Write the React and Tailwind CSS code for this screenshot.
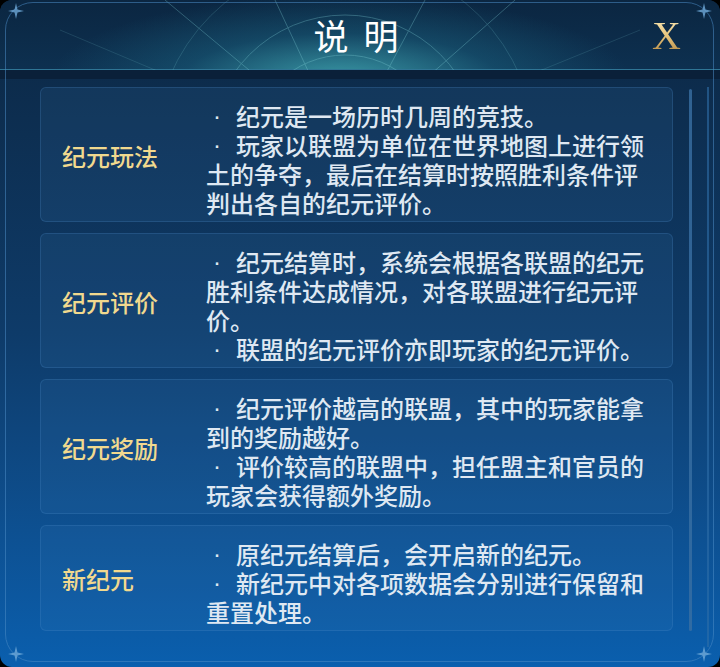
import React from "react";

const sections = [
  {
    title: "纪元玩法",
    lines: [
      [true, "纪元是一场历时几周的竞技。"],
      [true, "玩家以联盟为单位在世界地图上进行领"],
      [false, "土的争夺，最后在结算时按照胜利条件评"],
      [false, "判出各自的纪元评价。"],
    ],
  },
  {
    title: "纪元评价",
    lines: [
      [true, "纪元结算时，系统会根据各联盟的纪元"],
      [false, "胜利条件达成情况，对各联盟进行纪元评"],
      [false, "价。"],
      [true, "联盟的纪元评价亦即玩家的纪元评价。"],
    ],
  },
  {
    title: "纪元奖励",
    lines: [
      [true, "纪元评价越高的联盟，其中的玩家能拿"],
      [false, "到的奖励越好。"],
      [true, "评价较高的联盟中，担任盟主和官员的"],
      [false, "玩家会获得额外奖励。"],
    ],
  },
  {
    title: "新纪元",
    lines: [
      [true, "原纪元结算后，会开启新的纪元。"],
      [true, "新纪元中对各项数据会分别进行保留和"],
      [false, "重置处理。"],
    ],
  },
];

const FONT = { fontFamily: '"Noto Sans CJK SC", "Noto Sans", sans-serif' };

function HeaderArcs() {
  return (
    <svg
      className="absolute inset-0 pointer-events-none"
      width="720"
      height="70"
      viewBox="0 0 720 70"
    >
      <g fill="none" stroke="#86d6dc" strokeWidth="1" opacity="0.3">
        <circle cx="345" cy="150" r="95" />
        <circle cx="345" cy="150" r="135" />
        <circle cx="345" cy="150" r="190" opacity="0.6" />
        <line x1="345" y1="150" x2="165" y2="0" />
        <line x1="345" y1="150" x2="515" y2="0" />
        <line x1="345" y1="150" x2="275" y2="0" />
        <line x1="345" y1="150" x2="425" y2="0" />
        <line x1="345" y1="150" x2="60" y2="30" opacity="0.5" />
        <line x1="345" y1="150" x2="640" y2="30" opacity="0.5" />
      </g>
    </svg>
  );
}

function CornerStar({ className }) {
  return (
    <svg className={className} width="16" height="16" viewBox="0 0 16 16">
      <path
        d="M8 0 L9.5 6.5 L16 8 L9.5 9.5 L8 16 L6.5 9.5 L0 8 L6.5 6.5 Z"
        fill="#6fa9d8"
        opacity="0.8"
      />
    </svg>
  );
}

function Card({ title, lines }) {
  return (
    <div className="flex items-center rounded-[6px] border border-[#4d8cc6]/25 bg-[#3d82c4]/[0.13] pb-[8px] pl-[21px] pt-[9px]">
      <div className="w-[144px] shrink-0 text-[24px] font-medium leading-[29px] text-[#f1d98e]">
        {title}
      </div>
      <div className="-mb-[4px] flex flex-col pt-[4px] text-[24px] font-medium leading-[29px] text-[#dfe8f2]">
        {lines.map(([bullet, text], i) => (
          <div key={i} className="h-[29px] whitespace-nowrap">
            {bullet && (
              <span
                className="inline-block h-[29px] w-[30px] pl-[7px] text-left align-top leading-[29px]"
                style={{ fontFamily: '"Liberation Sans", sans-serif' }}
              >
                ·
              </span>
            )}
            {text}
          </div>
        ))}
      </div>
    </div>
  );
}

export default function App() {
  return (
    <div className="h-[667px] w-[720px] bg-black" style={FONT}>
      <div className="relative flex h-full w-full flex-col overflow-hidden rounded-[12px] bg-gradient-to-b from-[#0c2743] via-[#0e3b69] to-[#0a5fae]">
        {/* title bar */}
        <div className="relative h-[70px] shrink-0 border-b border-[#2f7595] bg-[radial-gradient(ellipse_290px_85px_at_340px_80px,rgba(70,180,188,0.8),rgba(30,110,138,0.4)_55%,rgba(11,38,66,0)_100%),linear-gradient(180deg,#0b2641,#0d3050)]">
          <HeaderArcs />
          <div className="relative flex h-full items-center justify-center gap-[15px] pr-[8px] pt-[2px] text-[35px] text-white">
            <span>说</span>
            <span>明</span>
          </div>
          <div
            className="absolute right-[39px] top-[13px] bg-gradient-to-b from-[#fdefc2] via-[#e6c47c] to-[#a87a34] bg-clip-text text-[40px] leading-[46px] text-transparent"
            style={{ fontFamily: '"Liberation Serif", serif' }}
          >
            X
          </div>
        </div>
        <div className="h-[9px] shrink-0 bg-[#0a2039]" />

        {/* body */}
        <div className="flex flex-1 pt-[8px]">
          <div className="ml-[40px] flex w-[633px] flex-col gap-[11px]">
            {sections.map((s) => (
              <Card key={s.title} title={s.title} lines={s.lines} />
            ))}
          </div>
          <div className="ml-[16px] mt-[2px] h-[542px] w-[3px] rounded-full bg-[#3a6fa3]/80" />
          <div className="ml-[15px] h-[560px] w-[2px] bg-[#2f6ea8]/60" />
        </div>

        {/* outer frame line */}
        <div className="pointer-events-none absolute bottom-[5px] left-[5px] right-[6px] top-[2px] rounded-[28px] border border-[#4a8bc4]/55" />
        <CornerStar className="absolute left-[8px] top-[3px]" />
        <CornerStar className="absolute right-[8px] top-[3px]" />
        <CornerStar className="absolute bottom-[5px] left-[8px]" />
        <CornerStar className="absolute bottom-[5px] right-[8px]" />
      </div>
    </div>
  );
}
